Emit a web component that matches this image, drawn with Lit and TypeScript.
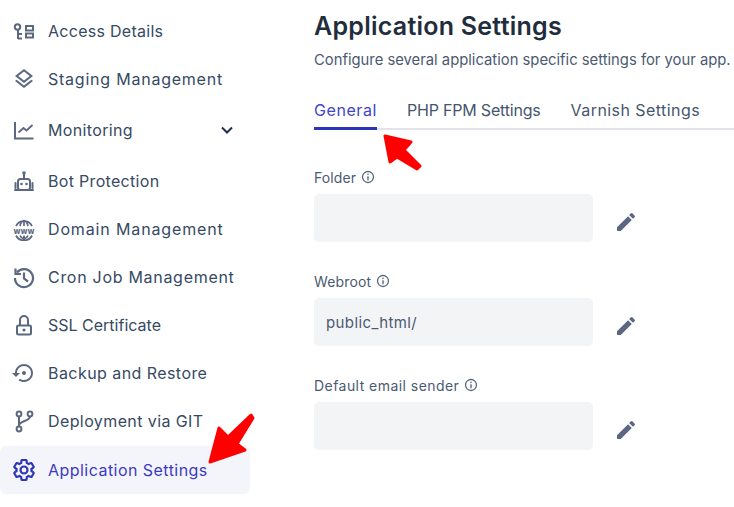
import { LitElement, html, css, svg } from "lit";
import { customElement } from "lit/decorators.js";

const icons: Record<string, any> = {
  access: svg`<g fill="none" stroke="currentColor" stroke-width="2"><circle cx="5.500" cy="8" r="2.700"/><path d="M6 10.500V20M6 15h4M6 19.500h4"/><rect x="14" y="7" width="7" height="4.500"/><rect x="14" y="14.500" width="7" height="4"/></g>`,
  layers: svg`<path fill="currentColor" d="M11.990 18.540l-7.370-5.730L3 14.070l9 7 9-7-1.630-1.270-7.380 5.740zM12 16l7.360-5.730L21 9l-9-7-9 7 1.630 1.270L12 16zm0-11.470L17.740 9 12 13.470 6.260 9 12 4.530z"/>`,
  chart: svg`<g fill="none" stroke="currentColor" stroke-width="2"><path d="M3 4v16.500h18.500"/></g><path d="M6.500 14.500l5-4.500 3 2.500 6-5.500" fill="none" stroke="currentColor" stroke-width="1.800"/>`,
  bot: svg`<g fill="none" stroke="currentColor" stroke-width="2"><rect x="6" y="10" width="12" height="11" rx="2.500"/><path d="M12 5v5M3.500 14v5M20.500 14v5M3 21h18" stroke-linecap="round"/></g><circle cx="12" cy="4" r="1.800" fill="currentColor"/><circle cx="9.500" cy="15" r="1.300" fill="currentColor"/><circle cx="14.500" cy="15" r="1.300" fill="currentColor"/>`,
  www: svg`<g fill="none" stroke="currentColor" stroke-width="1.700"><path d="M4 9a9 9 0 0116 0M4 18.500a9 9 0 0016 0M12 3.500V9M12 18.500V22M8 9c.6-3 2.200-5 4-5.500 1.800.5 3.400 2.500 4 5.500M8 18.500c.6 1.700 2.200 3 4 3.500 1.800-.5 3.400-1.800 4-3.500"/></g><text x="12" y="16.500" text-anchor="middle" font-family="'DejaVu Sans',sans-serif" font-size="8" font-weight="700" fill="currentColor" textLength="21" lengthAdjust="spacingAndGlyphs">www</text>`,
  history: svg`<g fill="none" stroke="currentColor" stroke-width="2.200"><path d="M5 7.500A9 9 0 113 13"/><path d="M3.500 3.500V9H9"/><path d="M12 7.500v6l4 3"/></g>`,
  lock: svg`<g fill="none" stroke="currentColor" stroke-width="2"><rect x="5" y="12.500" width="14" height="9" rx="1.500"/><path d="M8 12.500V7a4 4 0 018 0v5.500"/></g><circle cx="12" cy="17" r="1.600" fill="currentColor"/>`,
  backup: svg`<path fill="currentColor" d="M14 12c0-1.100-.9-2-2-2s-2 .9-2 2 .9 2 2 2 2-.9 2-2zm-2-9c-4.970 0-9 4.030-9 9H0l4 4 4-4H5c0-3.870 3.130-7 7-7s7 3.130 7 7-3.130 7-7 7c-1.510 0-2.910-.49-4.060-1.300l-1.420 1.440C8.040 20.300 9.940 21 12 21c4.970 0 9-4.030 9-9s-4.030-9-9-9z"/>`,
  git: svg`<g fill="none" stroke="currentColor" stroke-width="2"><circle cx="7" cy="5" r="2.400"/><circle cx="18" cy="5" r="2.400"/><circle cx="7" cy="20" r="2.400"/><path d="M7 7.500v10M18 7.500c0 5-11 4-11 9"/></g>`,
  gear: svg`<g fill="none" stroke="currentColor" stroke-width="2.200"><path d="M19.430 12.980c.04-.32.07-.64.07-.98s-.03-.66-.07-.98l2.110-1.650c.19-.15.24-.42.12-.64l-2-3.460c-.12-.22-.39-.3-.61-.22l-2.490 1c-.52-.4-1.080-.73-1.690-.98l-.38-2.650C14.460 2.180 14.250 2 14 2h-4c-.25 0-.46.18-.49.42l-.38 2.650c-.61.25-1.170.59-1.690.98l-2.490-1c-.23-.09-.49 0-.61.22l-2 3.460c-.13.22-.07.49.12.64l2.110 1.650c-.04.32-.07.65-.07.98s.03.66.07.98l-2.110 1.650c-.19.15-.24.42-.12.64l2 3.460c.12.22.39.3.61.22l2.490-1c.52.4 1.080.73 1.690.98l.38 2.650c.03.24.24.42.49.42h4c.25 0 .46-.18.49-.42l.38-2.650c.61-.25 1.170-.59 1.690-.98l2.490 1c.23.09.49 0 .61-.22l2-3.460c.12-.22.07-.49-.12-.64l-2.110-1.650z"/><circle cx="12" cy="12" r="3.500"/></g>`,
};

const items = [
  { icon: "access", label: "Access Details", track: 0.28 },
  { icon: "layers", label: "Staging Management", track: 0.77 },
  { icon: "chart", label: "Monitoring", track: 0.35, chevron: true },
  { icon: "bot", label: "Bot Protection", track: 0.31 },
  { icon: "www", label: "Domain Management", track: 0.86 },
  { icon: "history", label: "Cron Job Management", track: 0.71 },
  { icon: "lock", label: "SSL Certificate", track: 0 },
  { icon: "backup", label: "Backup and Restore", track: 0.44 },
  { icon: "git", label: "Deployment via GIT", track: 0.4 },
  { icon: "gear", label: "Application Settings", track: 0.46, active: true },
];

const tabs = [
  { label: "General", track: 0.57, active: true },
  { label: "PHP FPM Settings", track: -0.19 },
  { label: "Varnish Settings", track: 0.44 },
];

const fields = [
  { label: "Folder", track: 0.1, value: "" },
  { label: "Webroot", track: 0.15, value: "public_html/" },
  { label: "Default email sender", track: 0.45, value: "" },
];

@customElement("app-root")
export class AppRoot extends LitElement {
  static styles = css`
    :host { display: flex; position: relative; width: 734px; height: 507px; overflow: hidden; background: #fff; font-family: Inter, "Liberation Sans", sans-serif; }
    .side { width: 250px; flex: none; padding-top: 7px; box-sizing: border-box; }
    .item { display: flex; align-items: center; height: 48px; padding-left: 12px; gap: 12px; color: #364a63; font-size: 16px; border-radius: 6px; }
    .item svg.ic { width: 24px; height: 24px; color: #5b6880; flex: none; }
    .item.tall { height: 54px; }
    .item.active { background: #f4f5fa; color: #3d39c4; margin-top: 1px; }
    .item.active svg.ic { color: #2f37b8; }
    .chev { margin-left: auto; margin-right: 16px; width: 14px; height: 14px; color: #1f2d4d; }
    .main { margin-left: 64px; flex: 1; min-width: 0; }
    h1 { margin: 11px 0 0; font-size: 25px; line-height: 30px; font-weight: 600; letter-spacing: 0.25px; color: #1f2d3d; white-space: nowrap; }
    .sub { margin: 9px 0 0; font-size: 14.8px; line-height: 20px; color: #4b5a72; white-space: nowrap; }
    .tabs { display: flex; gap: 30px; margin-top: 19px; height: 41px; border-bottom: 2px solid #e3e3eb; box-sizing: border-box; font-size: 16px; color: #46566e; }
    .tab { height: 41px; box-sizing: border-box; line-height: 20px; padding-top: 11px; }
    .tab.active { color: #3f46c8; border-bottom: 3px solid #2b35b8; }
    .fields { display: flex; flex-direction: column; gap: 30px; margin-top: 38px; }
    .label { display: flex; align-items: center; gap: 5px; height: 18px; font-size: 14px; color: #4b5a72; }
    .label svg { width: 14px; height: 14px; color: #5b6880; }
    .row { display: flex; align-items: center; margin-top: 8px; gap: 21px; }
    .input { width: 279px; height: 48px; background: #f3f4f6; border-radius: 5px; padding: 0 12px; box-sizing: border-box; display: flex; align-items: center; font-size: 15px; letter-spacing: 0.4px; color: #4b5a72; }
    .pencil { width: 24px; height: 24px; margin-top: 8px; color: #5b6880; }
    .arrows { position: absolute; left: 0; top: 0; width: 734px; height: 507px; pointer-events: none; }
  `;

  render() {
    return html`
      <nav class="side">
        ${items.map(
          (i) => html`<div class="item ${i.active ? "active" : ""} ${i.chevron ? "tall" : ""}">
            <svg class="ic" viewBox="0 0 24 24">${icons[i.icon]}</svg>
            <span style="letter-spacing:${i.track}px">${i.label}</span>
            ${i.chevron
              ? html`<svg class="chev" viewBox="0 0 14 14"><path d="M2 4.500l5 5 5-5" fill="none" stroke="currentColor" stroke-width="2"/></svg>`
              : ""}
          </div>`
        )}
      </nav>
      <main class="main">
        <h1>Application Settings</h1>
        <p class="sub">Configure several application specific settings for your app.</p>
        <div class="tabs">
          ${tabs.map((t) => html`<div class="tab ${t.active ? "active" : ""}" style="letter-spacing:${t.track}px">${t.label}</div>`)}
        </div>
        <div class="fields">
          ${fields.map(
            (f) => html`<div>
              <div class="label"><span style="letter-spacing:${f.track}px">${f.label}</span>
                <svg viewBox="0 0 14 14"><circle cx="7" cy="7" r="5.500" fill="none" stroke="currentColor" stroke-width="1.300"/><path d="M7 6.200v4M7 3.700v1.400" stroke="currentColor" stroke-width="1.400"/></svg>
              </div>
              <div class="row">
                <div class="input">${f.value}</div>
                <svg class="pencil" viewBox="0 0 24 24"><path fill="currentColor" d="M3 17.250V21h3.750L17.810 9.940l-3.750-3.750L3 17.250zM20.710 7.040a1 1 0 000-1.410l-2.340-2.340a1 1 0 00-1.410 0l-1.830 1.830 3.750 3.750 1.830-1.830z"/></svg>
              </div>
            </div>`
          )}
        </div>
      </main>
      <svg class="arrows" viewBox="0 0 734 507">
        <g fill="#f00" stroke="#f00" stroke-width="3" stroke-linejoin="round">
          <polygon points="210,462 219,428 228,437 251,415 253,418 237,444 245,450"/>
          <polygon points="385,136 411,142 404,150 420,166 417,169 397,157 390,162"/>
        </g>
      </svg>
    `;
  }
}
